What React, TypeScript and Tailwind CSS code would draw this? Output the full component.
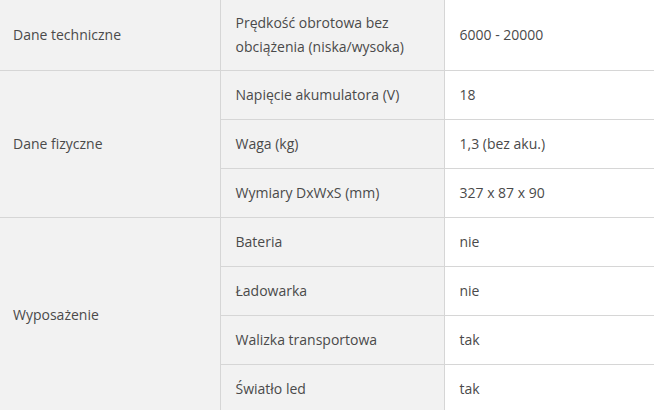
import React from 'react'

type Group = {
    label: string
    rows: { name: React.ReactNode; value: string }[]
}

const groups: Group[] = [
    {
        label: 'Dane techniczne',
        rows: [
            {
                name: (
                    <>
                        Prędkość obrotowa bez
                        <br />
                        obciążenia (niska/wysoka)
                    </>
                ),
                value: '6000 - 20000',
            },
        ],
    },
    {
        label: 'Dane fizyczne',
        rows: [
            { name: 'Napięcie akumulatora (V)', value: '18' },
            { name: 'Waga (kg)', value: '1,3 (bez aku.)' },
            { name: 'Wymiary DxWxS (mm)', value: '327 x 87 x 90' },
        ],
    },
    {
        label: 'Wyposażenie',
        rows: [
            { name: 'Bateria', value: 'nie' },
            { name: 'Ładowarka', value: 'nie' },
            { name: 'Walizka transportowa', value: 'tak' },
            { name: 'Światło led', value: 'tak' },
        ],
    },
]

export default function App() {
    return (
        <div className="w-[654px] h-[410px] overflow-hidden bg-white font-['Open_Sans',sans-serif] text-[14px] leading-[24px] text-[#4a4a4a]">
            <table className="w-[654px] table-fixed border-collapse">
                <colgroup>
                    <col className="w-[220px]" />
                    <col className="w-[224px]" />
                    <col />
                </colgroup>
                <tbody>
                    {groups.map((group, gi) =>
                        group.rows.map((row, ri) => (
                            <tr
                                key={`${gi}-${ri}`}
                                className={gi === 0 ? 'h-[70px]' : 'h-[49px]'}
                            >
                                {ri === 0 && (
                                    <td
                                        rowSpan={group.rows.length}
                                        className="bg-[#f2f2f2] border-b border-r border-[#d6d6d6] pl-[13px] pr-3 align-middle"
                                    >
                                        {group.label}
                                    </td>
                                )}
                                <td className="bg-[#f2f2f2] border-b border-r border-[#d6d6d6] pl-[15px] pr-3 align-middle">
                                    {row.name}
                                </td>
                                <td className="bg-white border-b border-[#d6d6d6] pl-[15px] pr-3 align-middle">
                                    {row.value}
                                </td>
                            </tr>
                        ))
                    )}
                </tbody>
            </table>
        </div>
    )
}
